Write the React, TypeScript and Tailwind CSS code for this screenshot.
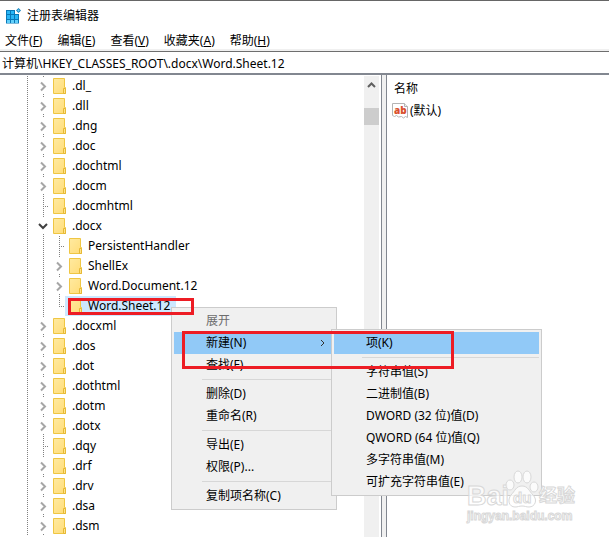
import { useState } from 'react';
import clsx from 'clsx';

type GuideKind = 'line' | 'tee' | 'corner' | 'closed' | 'open';

type TreeNode = {
  name: string;
  kind: GuideKind;
  child?: boolean;
};

type MenuEntry = {
  label: string;
  disabled?: boolean;
  active?: boolean;
  submenu?: boolean;
};

const menuBar = [
  { title: '文件', hotkey: 'F' },
  { title: '编辑', hotkey: 'E' },
  { title: '查看', hotkey: 'V' },
  { title: '收藏夹', hotkey: 'A' },
  { title: '帮助', hotkey: 'H' },
];

const nodes: TreeNode[] = [
  { name: '.dl_', kind: 'closed' },
  { name: '.dll', kind: 'closed' },
  { name: '.dng', kind: 'closed' },
  { name: '.doc', kind: 'closed' },
  { name: '.dochtml', kind: 'closed' },
  { name: '.docm', kind: 'closed' },
  { name: '.docmhtml', kind: 'tee' },
  { name: '.docx', kind: 'open' },
  { name: 'PersistentHandler', kind: 'tee', child: true },
  { name: 'ShellEx', kind: 'closed', child: true },
  { name: 'Word.Document.12', kind: 'closed', child: true },
  { name: 'Word.Sheet.12', kind: 'corner', child: true },
  { name: '.docxml', kind: 'closed' },
  { name: '.dos', kind: 'closed' },
  { name: '.dot', kind: 'closed' },
  { name: '.dothtml', kind: 'closed' },
  { name: '.dotm', kind: 'closed' },
  { name: '.dotx', kind: 'closed' },
  { name: '.dqy', kind: 'tee' },
  { name: '.drf', kind: 'closed' },
  { name: '.drv', kind: 'closed' },
  { name: '.dsa', kind: 'closed' },
  { name: '.dsm', kind: 'closed' },
];

const keyMenu: MenuEntry[][] = [
  [
    { label: '展开', disabled: true },
    { label: '新建(N)', active: true, submenu: true },
    { label: '查找(F)' },
  ],
  [{ label: '删除(D)' }, { label: '重命名(R)' }],
  [{ label: '导出(E)' }, { label: '权限(P)...' }],
  [{ label: '复制项名称(C)' }],
];

const newMenu: MenuEntry[][] = [
  [{ label: '项(K)', active: true }],
  [
    { label: '字符串值(S)' },
    { label: '二进制值(B)' },
    { label: 'DWORD (32 位)值(D)' },
    { label: 'QWORD (64 位)值(Q)' },
    { label: '多字符串值(M)' },
    { label: '可扩充字符串值(E)' },
  ],
];

function RegistryIcon() {
  return (
    <svg width="15" height="16" viewBox="0 0 15 16" aria-hidden="true">
      <path d="M0 2h12v1h1v12.500H0z" fill="#0878b8" />
      <path d="M1 3h3v3H1zM5 3h3v3H5zM1 7h3v4H1zM5 7h3v4H5zM9 7h3v4H9z" fill="#29b6f6" />
      <path d="M1 12h3v3H1zM5 12h3v3H5zM9 12h3v3H9z" fill="#62d0fb" />
      <path d="M9 0h6v6H9z" fill="#fff" />
      <path d="M12.500 0L15 2.500 12.500 5 10 2.500z" fill="#1583bd" />
      <path d="M12.500 1.300l1.200 1.200-1.200 1.200-1.200-1.200z" fill="#6fd3fa" />
    </svg>
  );
}

function FolderIcon() {
  return (
    <svg width="16" height="16" viewBox="0 0 16 16" className="shrink-0" aria-hidden="true">
      <defs>
        <linearGradient id="folder" x1="0" y1="0" x2="1" y2="1">
          <stop offset="0" stopColor="#ffeaa0" />
          <stop offset="1" stopColor="#ffdc78" />
        </linearGradient>
      </defs>
      <path d="M.5.5h11v9h1v6H.5z" fill="url(#folder)" stroke="#efc643" />
      <path d="M10.500 15.500v-5h2v5z" fill="#ffe38c" stroke="#e6b935" />
    </svg>
  );
}

function StringValueIcon() {
  return (
    <svg width="16" height="16" viewBox="0 0 16 16" aria-hidden="true">
      <path d="M.5.5h12l3 3v11l-2-1-2 1.500-2-1.500-3 .5-2-1.500-2 1-2-1z" fill="#fff" stroke="#b4b4b4" />
      <path d="M12.500.5v3h3" fill="#eee" stroke="#b4b4b4" />
      <text x="2" y="11" fontFamily="Open Sans, sans-serif" fontSize="10" fontWeight="800" fill="#d9502e">
        ab
      </text>
    </svg>
  );
}

// One 20px cell of the dotted tree lines, the trunk runs at x = 6
function Guide({ kind, last }: { kind: GuideKind; last?: boolean }) {
  return (
    <svg
      viewBox={last ? '0 0 12 20' : '0 0 16 20'}
      className={clsx('h-5 shrink-0', last ? 'w-3' : 'w-4')}
      fill="none"
      aria-hidden="true"
    >
      {(kind === 'line' || kind === 'tee') && (
        <path d="M6.500 0v20" stroke="#808080" strokeDasharray="1 1" />
      )}
      {kind === 'corner' && <path d="M6.500 0v10" stroke="#808080" strokeDasharray="1 1" />}
      {(kind === 'tee' || kind === 'corner') && (
        <path d="M6 10.500h6" stroke="#808080" strokeDasharray="1 1" />
      )}
      {(kind === 'closed' || kind === 'open') && (
        <path d="M6.500 0v1M6.500 18v1" stroke="#808080" />
      )}
      {kind === 'closed' && <path d="M4 6.500l4 4-4 4" stroke="#a6a6a6" strokeWidth="2" />}
      {kind === 'open' && <path d="M2 8l4 4 4-4" stroke="#404040" strokeWidth="2" />}
    </svg>
  );
}

function Tree() {
  const [selected, setSelected] = useState('Word.Sheet.12');

  return (
    <ul aria-label="注册表项" className="min-w-0 flex-1 overflow-hidden pt-px">
      {nodes.map((node) => (
        <li key={node.name} className="flex h-5 items-center pl-[21px]">
          <Guide kind="line" />
          {node.child && <Guide kind="line" />}
          <Guide kind={node.kind} last />
          <button
            onClick={() => setSelected(node.name)}
            className={clsx(
              'flex h-5 items-center gap-[3px] pr-1.5 pl-1',
              selected === node.name && 'bg-[#cce8ff]',
            )}
          >
            <FolderIcon />
            {node.name}
          </button>
        </li>
      ))}
    </ul>
  );
}

function PopupMenu({ label, groups }: { label: string; groups: MenuEntry[][] }) {
  return (
    <div
      role="menu"
      aria-label={label}
      className="border border-[#cccccc] bg-[#f0f0f0] p-0.5"
    >
      {groups.map((group, i) => (
        <div key={group[0].label}>
          {i > 0 && <hr className="my-[3px] ml-7 border-[#d7d7d7]" />}
          {group.map((entry) => (
            <button
              key={entry.label}
              role="menuitem"
              disabled={entry.disabled}
              className={clsx(
                'flex h-[22px] w-full items-center justify-between pr-2 pl-8 whitespace-nowrap',
                entry.active && 'bg-[#91c9f7]',
                entry.disabled && 'text-[#6d6d6d]',
              )}
            >
              {entry.label}
              {entry.submenu && (
                <svg width="6" height="8" viewBox="0 0 6 8" fill="none" aria-hidden="true">
                  <path d="M1 1l3 3-3 3" stroke="#333" />
                </svg>
              )}
            </button>
          ))}
        </div>
      ))}
    </div>
  );
}

function Watermark() {
  return (
    <div className="pointer-events-none absolute top-[469px] left-[467px] font-['Liberation_Sans','Noto_Sans_CJK_SC',sans-serif] font-bold text-white/70 [-webkit-text-stroke:1px_#d8d8d8]">
      <div className="flex h-[38px] items-end">
        <span className="text-[27px] leading-6">Bai</span>
        <svg
          width="34"
          height="38"
          viewBox="0 0 34 38"
          className="-ml-1"
          fill="#fff"
          fillOpacity=".75"
          stroke="#d8d8d8"
        >
          <ellipse cx="5" cy="15" rx="4" ry="5" />
          <ellipse cx="13" cy="7" rx="4" ry="6" />
          <ellipse cx="22" cy="7" rx="4" ry="6" />
          <ellipse cx="29" cy="17" rx="4" ry="5" />
          <path d="M17 16c6 0 7 5 11 9 5 5 2 12-4 12-3 0-4-1-7-1s-4 1-7 1c-6 0-8-7-4-12 4-4 5-9 11-9z" />
          <text x="8" y="33" fontSize="15">
            du
          </text>
        </svg>
        <span className="text-lg leading-6">经验</span>
      </div>
      <div className="text-xs leading-4">jingyan.baidu.com</div>
    </div>
  );
}

export default function App() {
  const [path, setPath] = useState('计算机\\HKEY_CLASSES_ROOT\\.docx\\Word.Sheet.12');

  return (
    <div className="relative flex h-screen flex-col overflow-hidden border-t border-[#666666] bg-white font-['Noto_Sans','Noto_Sans_CJK_SC',sans-serif] text-xs leading-5 text-black">
      <header className="flex h-[30px] shrink-0 items-center gap-1.5 pl-1.5">
        <RegistryIcon />
        <h1>注册表编辑器</h1>
      </header>
      <nav className="flex h-[18px] shrink-0 gap-[15px] pl-[5px]">
        {menuBar.map((item) => (
          <button key={item.title} className="h-5">
            {item.title}(<span className="underline">{item.hotkey}</span>)
          </button>
        ))}
      </nav>
      <div className="shrink-0 border-t-2 border-[#f0f0f0]">
        <input
          aria-label="地址"
          value={path}
          onChange={(e) => setPath(e.target.value)}
          className="block h-6 w-full border-t border-b-2 border-t-[#6e6e6e] border-b-[#828790] pt-px pl-0.5 outline-none"
        />
      </div>

      <main className="flex min-h-0 flex-1">
        <section className="flex w-[382px] shrink-0 border-r border-[#828790]">
          <Tree />
          <div className="mt-px mr-0.5 flex w-[15px] flex-col items-center bg-[#f0f0f0]">
            <svg width="15" height="17" viewBox="0 0 15 17" fill="none" aria-hidden="true">
              <path d="M4 11l3.500-3.500L11 11" stroke="#606060" strokeWidth="2" />
            </svg>
            <div className="mt-[15px] h-[17px] w-full bg-[#cdcdcd]" />
          </div>
        </section>
        <div className="w-1 shrink-0 bg-[#f0f0f0]" />
        <section className="min-w-0 flex-1 border-l border-[#828790] pt-0.5 pl-[5px]">
          <table className="text-left">
            <thead>
              <tr>
                <th className="h-6 pl-0.5 font-normal">名称</th>
              </tr>
            </thead>
            <tbody>
              <tr>
                <td className="flex items-center gap-0.5">
                  <StringValueIcon />
                  (默认)
                </td>
              </tr>
            </tbody>
          </table>
        </section>
      </main>

      <div className="absolute top-[306px] left-[171px] w-[166px]">
        <PopupMenu label="项菜单" groups={keyMenu} />
      </div>
      <div className="absolute top-[328px] left-[331px] w-[211px]">
        <PopupMenu label="新建" groups={newMenu} />
      </div>

      {/* red call-outs around the key and the menu path */}
      <div className="pointer-events-none absolute top-[297px] left-[68px] h-[17px] w-[126px] border-3 border-[#ed1c24]" />
      <div className="pointer-events-none absolute top-[330px] left-[182px] h-[38px] w-[272px] border-3 border-[#ed1c24]" />
      <Watermark />
    </div>
  );
}
